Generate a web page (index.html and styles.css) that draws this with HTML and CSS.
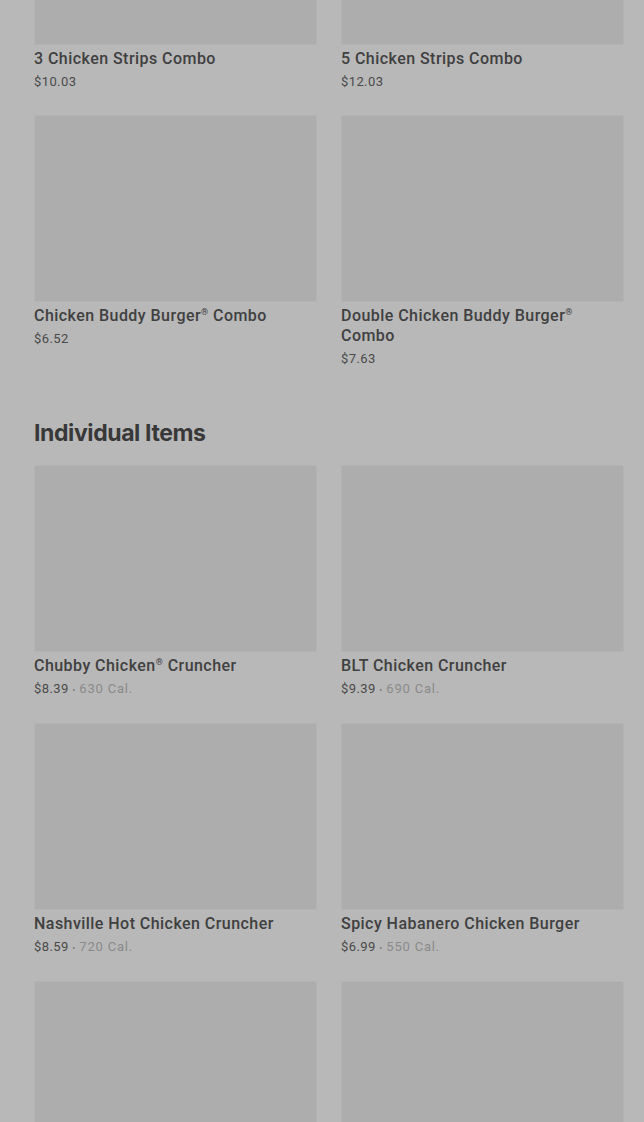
FILE: index.html
```html
<!DOCTYPE html>
<html lang="en">
<head>
    <meta charset="UTF-8">
    <meta name="viewport" content="width=device-width, initial-scale=1.0">
    <title>Menu</title>
    <link rel="stylesheet" href="styles.css">
</head>
<body>
    <div class="menu">
        <section class="menu-section combos">
            <div class="item-grid">
                <div class="item">
                    <div class="item-photo"></div>
                    <h3 class="item-name">3 Chicken Strips Combo</h3>
                    <p class="item-meta"><span class="price">$10.03</span></p>
                </div>
                <div class="item">
                    <div class="item-photo"></div>
                    <h3 class="item-name">5 Chicken Strips Combo</h3>
                    <p class="item-meta"><span class="price">$12.03</span></p>
                </div>
                <div class="item">
                    <div class="item-photo"></div>
                    <h3 class="item-name">Chicken Buddy Burger<sup>®</sup> Combo</h3>
                    <p class="item-meta"><span class="price">$6.52</span></p>
                </div>
                <div class="item">
                    <div class="item-photo"></div>
                    <h3 class="item-name">Double Chicken Buddy Burger<sup>®</sup> Combo</h3>
                    <p class="item-meta"><span class="price">$7.63</span></p>
                </div>
            </div>
        </section>

        <section class="menu-section">
            <h2 class="section-title">Individual Items</h2>
            <div class="item-grid">
                <div class="item">
                    <div class="item-photo"></div>
                    <h3 class="item-name">Chubby Chicken<sup>®</sup> Cruncher</h3>
                    <p class="item-meta"><span class="price">$8.39</span> <span class="dot">•</span> <span class="cal">630 Cal.</span></p>
                </div>
                <div class="item">
                    <div class="item-photo"></div>
                    <h3 class="item-name">BLT Chicken Cruncher</h3>
                    <p class="item-meta"><span class="price">$9.39</span> <span class="dot">•</span> <span class="cal">690 Cal.</span></p>
                </div>
                <div class="item">
                    <div class="item-photo"></div>
                    <h3 class="item-name">Nashville Hot Chicken Cruncher</h3>
                    <p class="item-meta"><span class="price">$8.59</span> <span class="dot">•</span> <span class="cal">720 Cal.</span></p>
                </div>
                <div class="item">
                    <div class="item-photo"></div>
                    <h3 class="item-name">Spicy Habanero Chicken Burger</h3>
                    <p class="item-meta"><span class="price">$6.99</span> <span class="dot">•</span> <span class="cal">550 Cal.</span></p>
                </div>
                <div class="item">
                    <div class="item-photo"></div>
                </div>
                <div class="item">
                    <div class="item-photo"></div>
                </div>
            </div>
        </section>
    </div>
</body>
</html>
```

FILE: styles.css
```css
body {
    margin: 0;
    background-color: #b8b8b8;
    font-family: Roboto, "Liberation Sans", Arial, sans-serif;
    color: #3b3b3b;
    overflow: hidden;
}

.menu {
    padding: 0 20px 0 34px;
}

.combos {
    margin-top: -142px;
}

.item-grid {
    display: grid;
    grid-template-columns: 1fr 1fr;
    column-gap: 24px;
    row-gap: 24px;
}

.item-photo {
    height: 185px;
    background-color: #adadad;
    border: 1px solid #b3b3b3;
    border-radius: 2px;
}

.item-name {
    margin: 4px 0 0;
    font-size: 16px;
    font-weight: 500;
    line-height: 20px;
    letter-spacing: 0.45px;
    color: #404040;
}

.item-name sup {
    font-size: 9px;
    line-height: 0;
    vertical-align: 6px;
}

.item-meta {
    margin: 4px 0 0;
    font-size: 13px;
    line-height: 18px;
    letter-spacing: 0.4px;
    color: #4a4a4a;
}

.dot {
    font-size: 9px;
    color: #7d7d7d;
}

.cal {
    color: #8a8a8a;
    letter-spacing: 0.8px;
}

.section-title {
    margin: 49px 0 16px;
    font-family: Inter, Roboto, sans-serif;
    font-size: 23px;
    font-weight: 700;
    line-height: 32px;
    letter-spacing: -0.4px;
    color: #383838;
}
```
